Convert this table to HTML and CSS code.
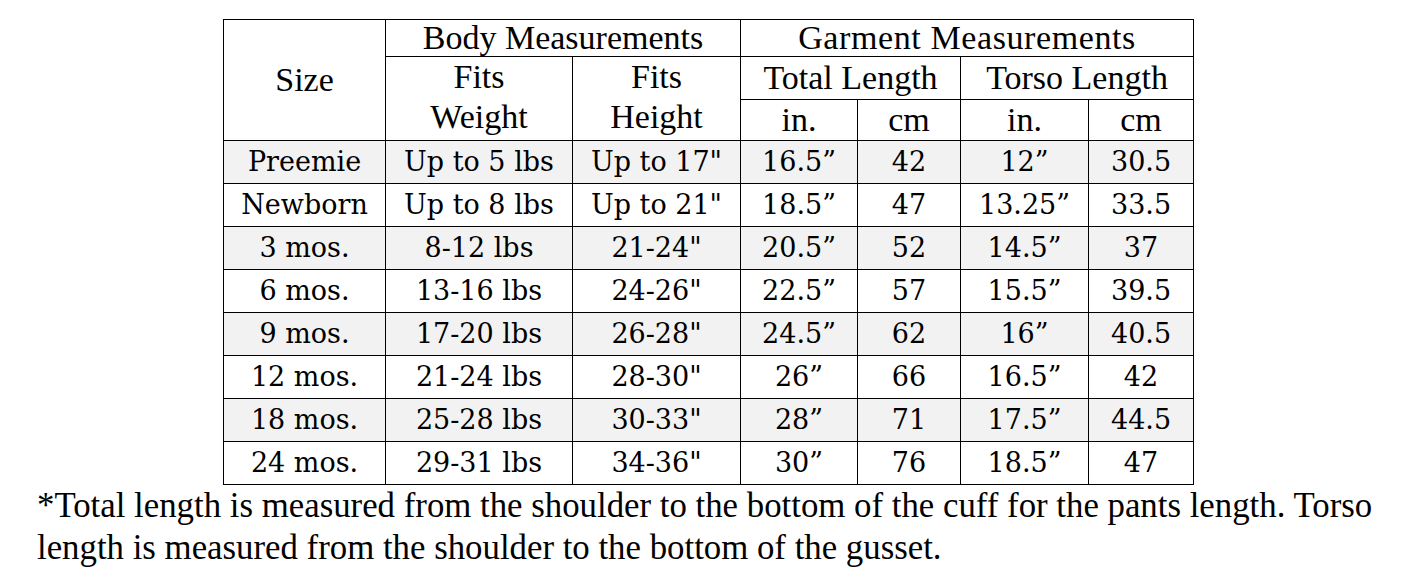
FILE: index.html
```html
<!DOCTYPE html>
<html>
<head>
<meta charset="utf-8">
<link rel="stylesheet" href="styles.css">
</head>
<body>
<div class="page">
  <table class="chart">
    <colgroup>
      <col class="c-size"><col class="c-wt"><col class="c-ht"><col class="c-tin"><col class="c-tcm"><col class="c-oin"><col class="c-ocm">
    </colgroup>
    <thead>
      <tr class="h1">
        <th rowspan="3">Size</th>
        <th colspan="2">Body Measurements</th>
        <th colspan="4" class="wide">Garment Measurements</th>
      </tr>
      <tr class="h2">
        <th rowspan="2" class="two">Fits<br>Weight</th>
        <th rowspan="2" class="two">Fits<br>Height</th>
        <th colspan="2">Total Length</th>
        <th colspan="2">Torso Length</th>
      </tr>
      <tr class="h3">
        <th>in.</th><th>cm</th><th>in.</th><th>cm</th>
      </tr>
    </thead>
    <tbody>
      <tr class="alt"><td>Preemie</td><td>Up to 5 lbs</td><td>Up to 17"</td><td>16.5”</td><td>42</td><td>12”</td><td>30.5</td></tr>
      <tr><td>Newborn</td><td>Up to 8 lbs</td><td>Up to 21"</td><td>18.5”</td><td>47</td><td>13.25”</td><td>33.5</td></tr>
      <tr class="alt"><td>3 mos.</td><td>8-12 lbs</td><td>21-24"</td><td>20.5”</td><td>52</td><td>14.5”</td><td>37</td></tr>
      <tr><td>6 mos.</td><td>13-16 lbs</td><td>24-26"</td><td>22.5”</td><td>57</td><td>15.5”</td><td>39.5</td></tr>
      <tr class="alt"><td>9 mos.</td><td>17-20 lbs</td><td>26-28"</td><td>24.5”</td><td>62</td><td>16”</td><td>40.5</td></tr>
      <tr><td>12 mos.</td><td>21-24 lbs</td><td>28-30"</td><td>26”</td><td>66</td><td>16.5”</td><td>42</td></tr>
      <tr class="alt"><td>18 mos.</td><td>25-28 lbs</td><td>30-33"</td><td>28”</td><td>71</td><td>17.5”</td><td>44.5</td></tr>
      <tr><td>24 mos.</td><td>29-31 lbs</td><td>34-36"</td><td>30”</td><td>76</td><td>18.5”</td><td>47</td></tr>
    </tbody>
  </table>
  <p class="note">*Total length is measured from the shoulder to the bottom of the cuff for the pants length. Torso length is measured from the shoulder to the bottom of the gusset.</p>
</div>
</body>
</html>
```

FILE: styles.css
```css
html, body {
  margin: 0;
  padding: 0;
  background: #fff;
}
.page {
  padding: 19px 0 0 37px;
  width: 1345px;
  color: #000;
}
.chart {
  border-collapse: collapse;
  margin-left: 186px;
  table-layout: fixed;
  width: 970px;
  font-family: "Liberation Serif", serif;
}
.c-size { width: 162px; }
.c-wt { width: 187px; }
.c-ht { width: 168px; }
.c-tin { width: 117px; }
.c-tcm { width: 103px; }
.c-oin { width: 128px; }
.c-ocm { width: 105px; }
.chart th, .chart td {
  border: 1px solid #000;
  padding: 0;
  text-align: center;
  font-weight: normal;
  white-space: nowrap;
}
.chart th {
  font-size: 34px;
  line-height: 34px;
}
.chart th.wide { letter-spacing: 0.6px; }
.h1 th { height: 36px; }
.h2 th { height: 42px; }
.h3 th { height: 40px; }
.chart th.two { line-height: 40px; padding-bottom: 3px; }
.chart td {
  font-family: "DejaVu Serif", serif;
  font-size: 27px;
  height: 42px;
  line-height: 34px;
}
.alt td { background: #f2f2f2; }
.note {
  margin: 0;
  font-family: "Liberation Serif", serif;
  font-size: 34.8px;
  line-height: 42px;
  width: 1345px;
}
```
